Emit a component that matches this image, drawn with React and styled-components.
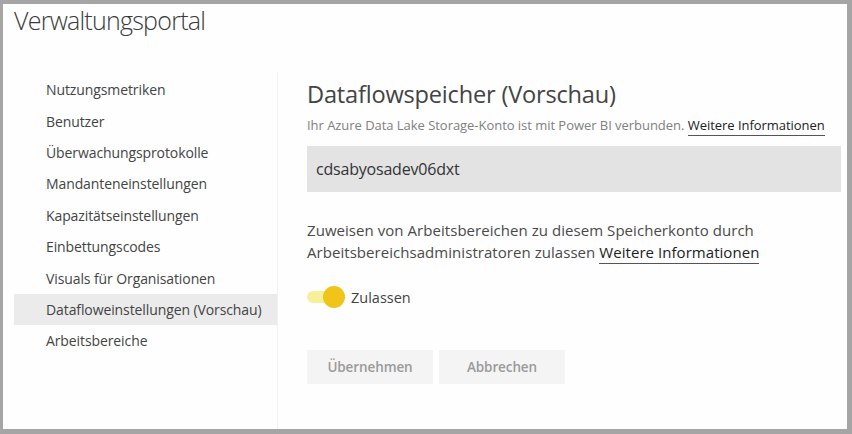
import React from "react";
import styled, { createGlobalStyle } from "styled-components";

const Global = createGlobalStyle`
  html, body { margin: 0; padding: 0; background: #a5a5a5; }
  body { font-family: "Open Sans", "Noto Sans", sans-serif; }
  * { box-sizing: border-box; }
`;

const Frame = styled.div`
  width: 852px;
  height: 434px;
  border-style: solid;
  border-color: #a5a5a5;
  border-width: 4px 5px 5px 3px;
  background: #fefefe;
  display: flex;
  flex-direction: column;
  overflow: hidden;
`;

const Title = styled.h1`
  margin: 0;
  padding: 0 0 0 11px;
  height: 68px;
  font-size: 25px;
  font-weight: 300;
  line-height: 33px;
  color: #3a3a3a;
  letter-spacing: -0.75px;
`;

const Body = styled.div`
  flex: 1;
  display: flex;
  padding-left: 11px;
`;

const Sidebar = styled.nav`
  width: 264px;
  border-right: 1px solid #f1f1f1;
  display: flex;
  flex-direction: column;
  padding-top: 2px;
`;

const NavItem = styled.div`
  height: 31.4px;
  display: flex;
  align-items: center;
  padding-left: 32px;
  font-size: 14px;
  color: #444;
  background: ${(p) => (p.$active ? "#ebebeb" : "transparent")};
  letter-spacing: -0.1px;
`;

const Main = styled.main`
  flex: 1;
  padding: 6px 6px 0 29px;
  display: flex;
  flex-direction: column;
`;

const Heading = styled.h2`
  margin: 0;
  font-size: 23.6px;
  font-weight: 400;
  line-height: 32px;
  color: #444;
  letter-spacing: -0.2px;
`;

const Sub = styled.p`
  margin: 6px 0 0;
  font-size: 13px;
  line-height: 18px;
  color: #808080;
  letter-spacing: -0.04px;
`;

const Link = styled.a`
  color: #222;
  text-decoration: none;
  border-bottom: 1px solid #555;
  padding-bottom: 1px;
`;

const Field = styled.div`
  margin-top: 12px;
  height: 46px;
  background: #e3e3e3;
  display: flex;
  align-items: center;
  padding-left: 9px;
  font-size: 16px;
  color: #333;
  letter-spacing: -0.2px;
`;

const Para = styled.p`
  margin: 27px 0 0;
  font-size: 15px;
  line-height: 22px;
  color: #4a4a4a;
  letter-spacing: 0.05px;
`;

const ToggleRow = styled.label`
  margin-top: 23px;
  display: flex;
  align-items: center;
  gap: 6px;
  font-size: 14.5px;
  color: #444;
`;

const Track = styled.span`
  position: relative;
  width: 38px;
  height: 22px;
  display: inline-block;
  &::before {
    content: "";
    position: absolute;
    left: 0;
    top: 5px;
    width: 32px;
    height: 12px;
    border-radius: 6px;
    background: #f7ef9a;
  }
`;

const Thumb = styled.span`
  position: absolute;
  right: 0;
  top: 0;
  width: 22px;
  height: 22px;
  border-radius: 50%;
  background: #f0c419;
`;

const Buttons = styled.div`
  margin-top: 42px;
  display: flex;
  gap: 6px;
`;

const Button = styled.button`
  width: 126px;
  height: 34px;
  border: none;
  background: #f4f4f4;
  color: #9a9a9a;
  font-family: inherit;
  font-size: 13.5px;
  font-weight: 600;
  letter-spacing: -0.1px;
`;

const items = [
  "Nutzungsmetriken",
  "Benutzer",
  "Überwachungsprotokolle",
  "Mandanteneinstellungen",
  "Kapazitätseinstellungen",
  "Einbettungscodes",
  "Visuals für Organisationen",
  "Datafloweinstellungen (Vorschau)",
  "Arbeitsbereiche",
];

export default function App() {
  return (
    <>
      <Global />
      <Frame>
        <Title>Verwaltungsportal</Title>
        <Body>
          <Sidebar>
            {items.map((t, i) => (
              <NavItem key={t} $active={i === 7}>
                {t}
              </NavItem>
            ))}
          </Sidebar>
          <Main>
            <Heading>Dataflowspeicher (Vorschau)</Heading>
            <Sub>
              Ihr Azure Data Lake Storage-Konto ist mit Power BI verbunden.{" "}
              <Link>Weitere Informationen</Link>
            </Sub>
            <Field>cdsabyosadev06dxt</Field>
            <Para>
              Zuweisen von Arbeitsbereichen zu diesem Speicherkonto durch
              <br />
              Arbeitsbereichsadministratoren zulassen{" "}
              <Link>Weitere Informationen</Link>
            </Para>
            <ToggleRow>
              <Track>
                <Thumb />
              </Track>
              Zulassen
            </ToggleRow>
            <Buttons>
              <Button>Übernehmen</Button>
              <Button>Abbrechen</Button>
            </Buttons>
          </Main>
        </Body>
      </Frame>
    </>
  );
}
